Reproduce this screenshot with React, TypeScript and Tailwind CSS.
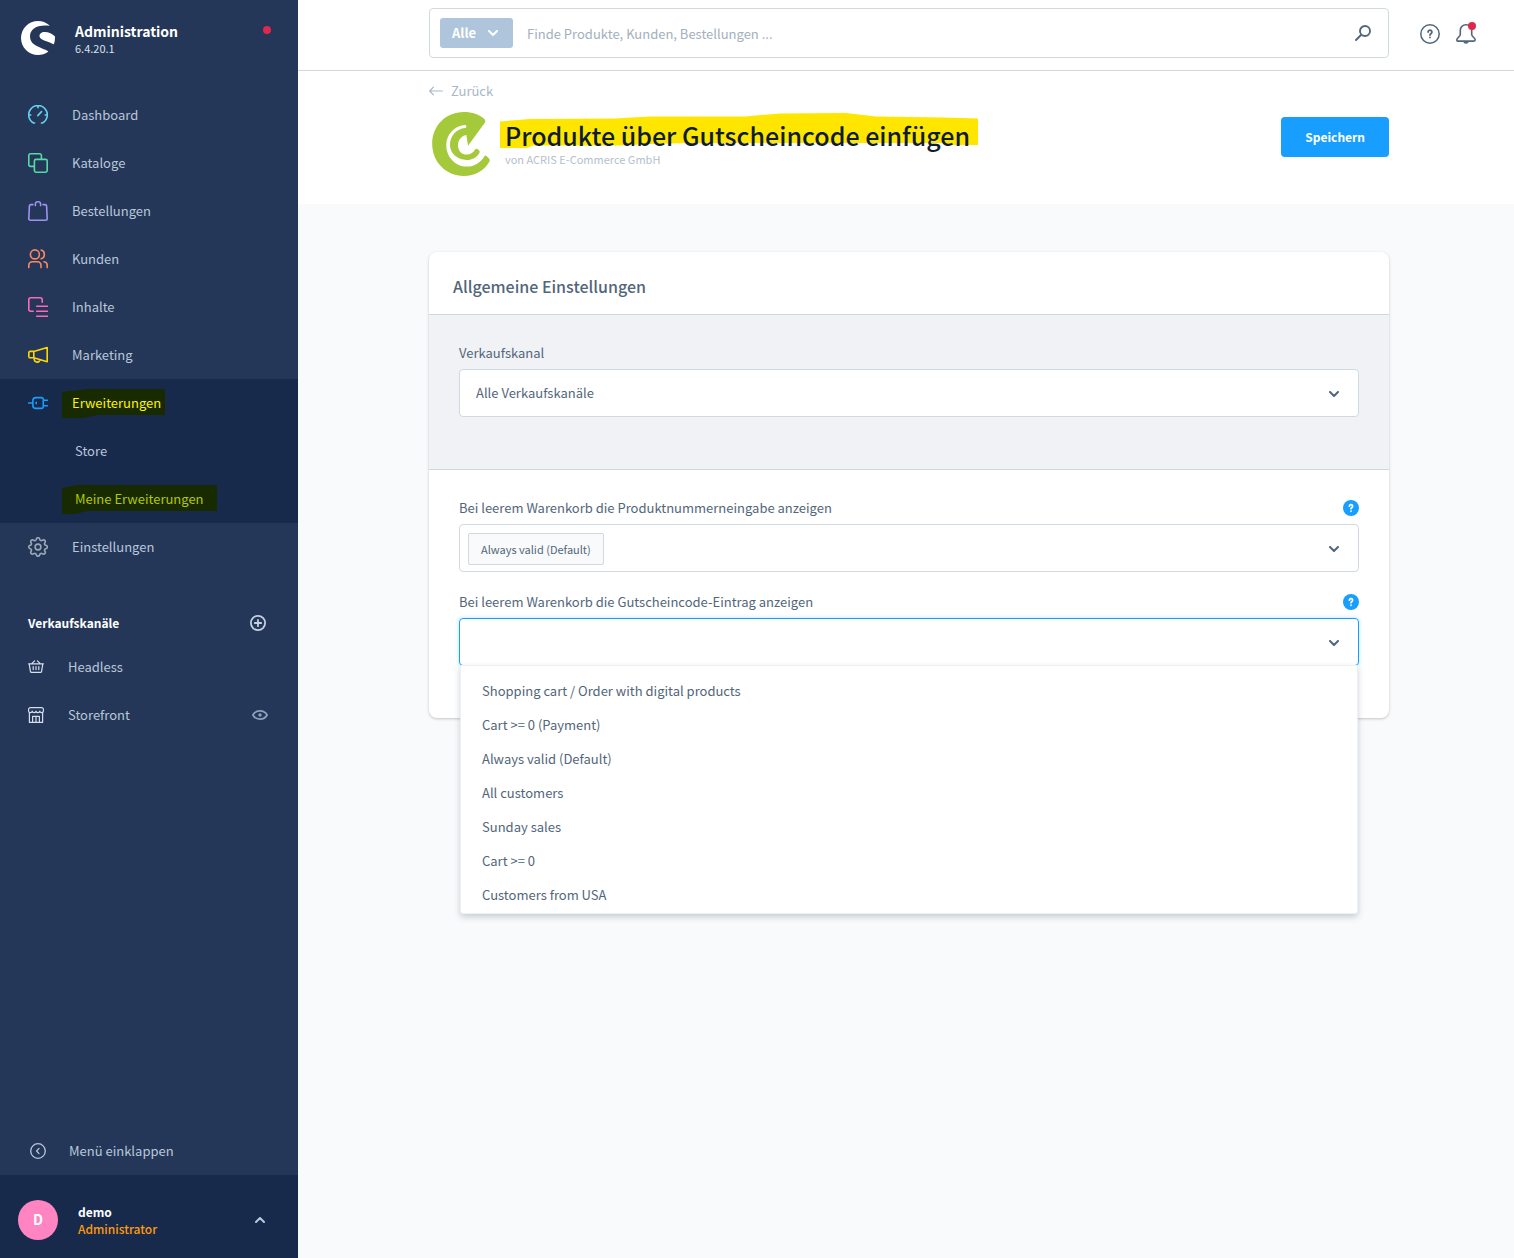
import type { ReactNode } from 'react';
import { SiShopware } from 'react-icons/si';

type IconProps = { children: ReactNode; className?: string };

function LineIcon({ children, className = '' }: IconProps) {
  return (
    <svg
      viewBox="0 0 20 20"
      fill="none"
      stroke="currentColor"
      strokeWidth="1.6"
      strokeLinecap="round"
      strokeLinejoin="round"
      aria-hidden="true"
      className={`h-5 w-5 shrink-0 ${className}`}
    >
      {children}
    </svg>
  );
}

const icons = {
  dashboard: (
    <LineIcon className="text-[#66d1ec]">
      <path d="M6.600 18H5.600A9.300 9.300 0 1 1 14.400 18H13.400M10 1v1.800M1 10h1.800M19 10h-1.800M9.800 10.600l3.700-4" />
    </LineIcon>
  ),
  catalogues: (
    <LineIcon className="text-[#57d9a3]">
      <path d="M6.200 13.400H2.400A1.600 1.600 0 0 1 .8 11.800V2.400A1.600 1.600 0 0 1 2.400.8h9.400a1.600 1.600 0 0 1 1.600 1.600v3.800" />
      <rect x="6.400" y="6.400" width="12.800" height="12.800" rx="1.600" />
    </LineIcon>
  ),
  orders: (
    <LineIcon className="text-[#a092f0]">
      <path d="M5 3.600H3A1.600 1.600 0 0 0 1.400 5.100L.8 17.700a1.500 1.500 0 0 0 1.500 1.500h15.400a1.500 1.500 0 0 0 1.500-1.500L18.600 5.100A1.600 1.600 0 0 0 17 3.600h-2M7.400 4.600V3A2.300 2.300 0 0 1 9.700.8h.6A2.300 2.300 0 0 1 12.600 3v1.600" />
    </LineIcon>
  ),
  customers: (
    <LineIcon className="text-[#f88962]">
      <circle cx="6.900" cy="5.400" r="4.500" />
      <path d="M.8 18.600v-2.400a3.400 3.400 0 0 1 3.400-3.400h5.400a3.400 3.400 0 0 1 3.400 3.400v2.400M13.200 1.100a4.500 4.500 0 0 1 0 8.600M16 12.800a3.600 3.600 0 0 1 3.200 3.500v2.300" />
    </LineIcon>
  ),
  content: (
    <LineIcon className="text-[#ff68b4]">
      <path d="M5.200 14.200H2.600A1.800 1.800 0 0 1 .8 12.400V2.600A1.800 1.800 0 0 1 2.600.8h9.800a1.800 1.800 0 0 1 1.800 1.800v2.600M8.700 9.300h10.700M8.700 14.300h10.700M8.700 19.200h10.700" />
    </LineIcon>
  ),
  marketing: (
    <LineIcon className="text-[#ffd700]">
      <path d="M5.800 6.400 19.200 2.600v14.200L5.800 12.800M5.800 6.400v6.400M5.800 6.400H2.200A1.400 1.400 0 0 0 .8 7.800v3.600a1.400 1.400 0 0 0 1.400 1.400h3.600M6.200 13v1.600a3 3 0 0 0 5.200 1.500l.3-1.300" />
    </LineIcon>
  ),
  extensions: (
    <LineIcon className="text-[#189eff]">
      <path d="M.7 10h4.200M4.900 7.600a3 3 0 0 1 3-3h5.600a1.800 1.800 0 0 1 1.800 1.800v7.200a1.800 1.800 0 0 1-1.800 1.800H7.900a3 3 0 0 1-3-3zM8.200 9.400v1.200M15.500 7.200h3.800M15.500 12.800h3.800" />
    </LineIcon>
  ),
  settings: (
    <LineIcon className="text-[#9aa8b5]">
      <circle cx="10" cy="10" r="2.900" />
      <path d="M8.200 2.500c.2-1.100.8-1.800 1.800-1.800s1.600.7 1.800 1.800c.3 1 1.500 1.500 2.400.9.900-.6 1.900-.7 2.600 0s.6 1.700 0 2.600c-.6.9-.1 2.100.9 2.300 1.100.2 1.700.8 1.700 1.700s-.6 1.500-1.700 1.700c-1 .2-1.500 1.400-.9 2.300.6.900.7 1.900 0 2.600s-1.700.6-2.600 0c-.9-.6-2.100-.1-2.400.9-.2 1.100-.8 1.800-1.800 1.800s-1.600-.7-1.800-1.800c-.3-1-1.500-1.500-2.400-.9-.9.600-1.900.7-2.600 0s-.6-1.700 0-2.600c.6-.9.1-2.100-.9-2.300C1.200 11.500.7 10.900.7 10s.5-1.500 1.600-1.700c1-.2 1.500-1.400.9-2.300-.6-.9-.7-1.900 0-2.600s1.700-.6 2.600 0c.9.600 2.100.1 2.400-.9z" />
    </LineIcon>
  ),
};

function Chevron({ className = '' }: { className?: string }) {
  return (
    <svg viewBox="0 0 10 6" fill="none" stroke="currentColor" strokeWidth="2" strokeLinecap="round" strokeLinejoin="round" aria-hidden="true" className={`h-[6px] w-[10px] shrink-0 ${className}`}>
      <path d="M1 1l4 4 4-4" />
    </svg>
  );
}

function BrandMark() {
  return (
    <svg viewBox="36 336 172 191" aria-hidden="true" className="h-16 w-[58px]" fill="#a4c93a">
      <path d="M130 336c25 0 47 8 61 20q6 6 2 12L143 437 138 405C122 408 113 421 113 435c0 17 11 28 26 28 11 0 19-5 25-15q4-4 8-1l4 4q3 3 1 7c-8 13-22 21-38 21-28 0-50-20-50-45 0-26 20-48 45-50q4 0 4-5t-5-4c-31 2-55 29-55 60 0 35 28 64 61 64 23 0 42-12 53-31q2-4 6-1l7 7q4 5 2 10c-14 26-43 43-77 43-53 0-94-42-94-96s41-95 94-95z" />
    </svg>
  );
}

const mainMenu = [
  { label: 'Dashboard', icon: icons.dashboard },
  { label: 'Kataloge', icon: icons.catalogues },
  { label: 'Bestellungen', icon: icons.orders },
  { label: 'Kunden', icon: icons.customers },
  { label: 'Inhalte', icon: icons.content },
  { label: 'Marketing', icon: icons.marketing },
];

function MenuLink({ label, icon }: { label: string; icon: ReactNode }) {
  return (
    <a href="#" className="flex h-12 items-center gap-6 pl-7">
      {icon}
      {label}
    </a>
  );
}

function Sidebar() {
  return (
    <aside className="flex w-[298px] shrink-0 flex-col bg-[#243758] text-[13px] text-[#b9c7da]">
      <div className="flex h-[91px] items-start pt-[21px] pr-[27px] pl-[21px]">
        <SiShopware aria-hidden="true" className="h-[34px] w-[34px] text-white" />
        <div className="ml-5 flex-1">
          <div className="text-[14px] leading-5 font-bold text-white">Administration</div>
          <div className="text-[11px] leading-[14px] text-[#d8e0ea]">6.4.20.1</div>
        </div>
        <span className="mt-[5px] h-2 w-2 rounded-full bg-[#de294c]" />
      </div>

      <nav aria-label="Hauptmenü">
        {mainMenu.map((m) => (
          <MenuLink key={m.label} {...m} />
        ))}
        <div className="bg-[#182a4c]">
          <a href="#" className="flex h-12 items-center gap-6 pl-7 text-[#fff200]">
            {icons.extensions}
            <span className="relative">
              <svg viewBox="0 0 103 29" preserveAspectRatio="none" aria-hidden="true" className="absolute -top-1 -left-[10px] h-[29px] w-[103px]">
                <path fill="#182a00" d="M0 3l27-3h76v26H36l-15 3H0z" />
              </svg>
              <span className="relative">Erweiterungen</span>
            </span>
          </a>
          <a href="#" className="flex h-12 items-center pl-[75px]">
            Store
          </a>
          <a href="#" className="flex h-12 items-center pl-[75px] text-[#b3c800]">
            <span className="relative">
              <svg viewBox="0 0 155 29" preserveAspectRatio="none" aria-hidden="true" className="absolute -top-1 -left-[13px] h-[29px] w-[155px]">
                <path fill="#182a00" d="M0 3l15-3h140v26H26l-13 3H0z" />
              </svg>
              <span className="relative">Meine Erweiterungen</span>
            </span>
          </a>
        </div>
        <MenuLink label="Einstellungen" icon={icons.settings} />
      </nav>

      <div className="mt-[31px] flex h-[41px] items-center justify-between pr-8 pl-7">
        <h2 className="text-[12px] font-bold text-white">Verkaufskanäle</h2>
        <button type="button" aria-label="Verkaufskanal hinzufügen" className="text-[#c3d0e2]">
          <svg viewBox="0 0 16 16" fill="none" stroke="currentColor" strokeWidth="1.800" strokeLinecap="round" className="h-4 w-4">
            <circle cx="8" cy="8" r="7.100" />
            <path d="M8 4.800v6.400M4.800 8h6.400" />
          </svg>
        </button>
      </div>
      <nav aria-label="Verkaufskanäle">
        <a href="#" className="flex h-12 items-center gap-6 pl-7">
          <svg viewBox="0 0 16 16" fill="none" stroke="#d5deea" strokeWidth="1.200" strokeLinecap="round" strokeLinejoin="round" aria-hidden="true" className="h-4 w-4">
            <path d="M.6 4.800h14.800M1.200 4.800l1.200 7.600a1.200 1.200 0 0 0 1.200 1h8.800a1.200 1.200 0 0 0 1.200-1l1.200-7.600M4 4.400l2.600-2.600M12 4.400 9.400 1.800M5.200 7.600v3M8 7.600v3M10.800 7.600v3" />
          </svg>
          Headless
        </a>
        <div className="flex h-12 items-center justify-between pr-[30px] pl-7">
          <a href="#" className="flex items-center gap-6">
            <svg viewBox="0 0 16 16" fill="none" stroke="#d5deea" strokeWidth="1.200" strokeLinecap="round" strokeLinejoin="round" aria-hidden="true" className="h-4 w-4">
              <path d="M2.400.6h11.200a1.800 1.800 0 0 1 1.800 1.800V4c0 1-.8 1.700-1.700 1.700-1.100 0-1.900-.7-1.900-1.700 0 1-.8 1.700-1.900 1.700S8 5 8 4c0 1-.8 1.700-1.900 1.700S4.200 5 4.200 4c0 1-.8 1.700-1.900 1.700C1.400 5.700.6 5 .6 4V2.400A1.800 1.800 0 0 1 2.400.6zM1.400 6v9.400h13.200V6M4.600 15.200V9.400h6.800v5.800M8 9.400v5.800" />
            </svg>
            Storefront
          </a>
          <button type="button" aria-label="Storefront öffnen" className="text-[#8fa2bc]">
            <svg viewBox="0 0 16 10" fill="none" stroke="currentColor" strokeWidth="1.700" className="h-[10px] w-4">
              <path d="M.9 5C2.400 2.200 5 .9 8 .9S13.600 2.200 15.100 5C13.600 7.800 11 9.100 8 9.100S2.400 7.800.9 5z" />
              <circle cx="8" cy="5" r="1.700" fill="currentColor" stroke="none" />
            </svg>
          </button>
        </div>
      </nav>

      <button type="button" className="mt-auto flex h-12 items-center gap-[23px] pl-[30px]">
        <svg viewBox="0 0 16 16" fill="none" stroke="currentColor" strokeWidth="1.300" strokeLinecap="round" strokeLinejoin="round" aria-hidden="true" className="h-4 w-4">
          <circle cx="8" cy="8" r="7.300" />
          <path d="M9 5.400 6.600 8 9 10.600" />
        </svg>
        Menü einklappen
      </button>
      <button type="button" className="flex h-[83px] items-center bg-[#182a4c] pt-[6px] pr-[33px] pl-[18px] text-left">
        <span className="flex h-10 w-10 items-center justify-center rounded-full bg-[#ff85c2] text-[14px] font-bold text-white">D</span>
        <span className="ml-5 flex-1 text-[12px] leading-[17px]">
          <span className="block font-bold text-white">demo</span>
          <span className="block font-medium text-[#ff9a0a]">Administrator</span>
        </span>
        <Chevron className="rotate-180" />
      </button>
    </aside>
  );
}

function TopBar() {
  return (
    <header className="grid grid-cols-[1fr_minmax(0,960px)_1fr] items-center border-b border-[#d1d9e0] bg-white pt-2 pb-3 pl-[6px]">
      <div />
      <form role="search" className="flex h-[50px] items-center rounded border border-[#d1d9e0] pr-4 pl-[10px]" onSubmit={(e) => e.preventDefault()}>
        <button type="button" className="flex h-[30px] w-[73px] items-center justify-between rounded-[3px] bg-[#afc5dc] pr-[15px] pl-3 text-[13px] font-bold text-white">
          Alle
          <Chevron />
        </button>
        <input
          type="text"
          aria-label="Suche"
          placeholder="Finde Produkte, Kunden, Bestellungen ..."
          className="ml-[14px] h-8 min-w-0 flex-1 text-[13px] outline-none placeholder:text-[#a3b0bd]"
        />
        <button type="submit" aria-label="Suchen" className="text-[#52667a]">
          <svg viewBox="0 0 18 18" fill="none" stroke="currentColor" strokeWidth="1.900" strokeLinecap="round" className="h-[18px] w-[18px]">
            <circle cx="11" cy="7" r="5" />
            <path d="M7 11 2 16" />
          </svg>
        </button>
      </form>
      <div className="flex items-center gap-4 pt-[2px] pl-[31px] text-[#52667a]">
        <button type="button" aria-label="Hilfe">
          <svg viewBox="0 0 20 20" fill="none" stroke="currentColor" strokeWidth="1.500" strokeLinecap="round" className="h-5 w-5">
            <circle cx="10" cy="10" r="9.200" />
            <path strokeWidth="1.800" d="M8.100 8.100a1.900 1.900 0 1 1 3 1.500c-.7.500-1.100.8-1.100 1.400M10 13.300v.1" />
          </svg>
        </button>
        <button type="button" aria-label="Benachrichtigungen" className="relative">
          <svg viewBox="0 0 20 20" fill="none" stroke="currentColor" strokeWidth="1.600" strokeLinecap="round" strokeLinejoin="round" className="h-5 w-5">
            <path d="M4.300 6.300A5.500 5.500 0 0 1 9.800.8h.4a5.500 5.500 0 0 1 5.500 5.500v4.200c0 2 3.500 3.500 3.500 5.300 0 .9-.5 1.300-1.400 1.300H2.200c-.9 0-1.400-.4-1.400-1.300 0-1.800 3.500-3.300 3.500-5.300zM7.800 17.300a2.300 2.300 0 0 0 4.400 0" />
          </svg>
          <span className="absolute -top-[2px] right-0 h-2 w-2 rounded-full bg-[#de294c]" />
        </button>
      </div>
    </header>
  );
}

function PageHead() {
  return (
    <div className="bg-white pt-3 pb-7 pl-[6px]">
      <div className="mx-auto max-w-[960px]">
        <div className="flex">
          <a href="#" className="flex items-center gap-2 text-[13px] leading-4 text-[#a9b8c8]">
            <svg viewBox="0 0 14 10" fill="none" stroke="currentColor" strokeWidth="1.200" strokeLinecap="round" strokeLinejoin="round" aria-hidden="true" className="h-[10px] w-[14px]">
              <path d="M13.400 5H.8M4.400 1.200.7 5l3.700 3.800" />
            </svg>
            Zurück
          </a>
        </div>
        <div className="flex items-start pt-3">
          <div className="mt-px ml-[3px]">
            <BrandMark />
          </div>
          <div className="mt-2 ml-[15px] flex-1">
            <h1 className="text-[25px] leading-8 font-medium text-[#0e1c33]">
              <span className="relative inline-block">
                <svg viewBox="0 0 478 35" preserveAspectRatio="none" aria-hidden="true" className="absolute -top-[6px] -left-[5px] h-[35px] w-[478px]">
                  <path fill="#ffe600" d="M0 8.500 30 6l85-.5L150 3.500h95L280 .5 346 0l30 3.500 67 1 35 1V32h-25l-10-2H190l-40 1-30 1.500H33L27 35H0z" />
                </svg>
                <span className="relative">Produkte über Gutscheincode einfügen</span>
              </span>
            </h1>
            <p className="text-[11px] leading-4 text-[#b3c0ce]">von ACRIS E-Commerce GmbH</p>
          </div>
          <button type="button" className="mt-[6px] h-10 rounded bg-[#189eff] px-6 text-[12px] font-bold text-white">
            Speichern
          </button>
        </div>
      </div>
    </div>
  );
}

function HelpBadge() {
  return (
    <button type="button" aria-label="Hilfe anzeigen" className="flex h-4 w-4 items-center justify-center rounded-full bg-[#189eff] text-white">
      <svg viewBox="0 0 16 16" fill="none" stroke="currentColor" strokeWidth="1.700" strokeLinecap="round" className="h-4 w-4">
        <path d="M6.400 6.200a1.600 1.600 0 1 1 2.500 1.300c-.6.400-.9.700-.9 1.200M8 11.200v.1" />
      </svg>
    </button>
  );
}

const rules = [
  'Shopping cart / Order with digital products',
  'Cart >= 0 (Payment)',
  'Always valid (Default)',
  'All customers',
  'Sunday sales',
  'Cart >= 0',
  'Customers from USA',
];

function SettingsCard() {
  return (
    <section className="mx-auto max-w-[960px] rounded-lg bg-white text-[13px] text-[#52667a] shadow-[0_1px_3px_rgba(0,0,0,0.22)]">
      <h2 className="flex h-[62px] items-center px-6 pt-[6px] text-[16px] font-medium">Allgemeine Einstellungen</h2>
      <div className="border-y border-[#d1d9e0] bg-[#f0f2f5] px-[30px] pt-[26px] pb-[52px]">
        <label htmlFor="channel" className="block leading-6">
          Verkaufskanal
        </label>
        <div className="relative mt-1">
          <select id="channel" className="block h-12 w-full appearance-none rounded border border-[#d1d9e0] bg-white px-4">
            <option>Alle Verkaufskanäle</option>
          </select>
          <Chevron className="pointer-events-none absolute top-[22px] right-5" />
        </div>
      </div>
      <div className="px-[30px] pt-[26px] pb-[52px]">
        <div className="flex items-center justify-between leading-6">
          <label htmlFor="number-rule">Bei leerem Warenkorb die Produktnummerneingabe anzeigen</label>
          <HelpBadge />
        </div>
        <div className="mt-1 flex h-12 items-center rounded border border-[#d1d9e0] pt-[2px] pr-[19px] pl-2">
          <span className="flex h-8 items-center rounded-[2px] border border-[#d1d9e0] bg-[#f9fafb] px-3 text-[11px]">Always valid (Default)</span>
          <input id="number-rule" type="text" className="h-8 min-w-0 flex-1 outline-none" />
          <Chevron />
        </div>

        <div className="mt-[18px] flex items-center justify-between leading-6">
          <label htmlFor="code-rule">Bei leerem Warenkorb die Gutscheincode-Eintrag anzeigen</label>
          <HelpBadge />
        </div>
        <div className="relative mt-1">
          <div className="flex h-12 items-center rounded border border-[#189eff] pt-[2px] pr-[19px] pl-2 shadow-[0_0_4px_rgba(24,158,255,0.3)]">
            <input id="code-rule" type="text" role="combobox" aria-expanded="true" aria-controls="rule-list" className="h-8 min-w-0 flex-1 outline-none" />
            <Chevron />
          </div>
          <ul
            id="rule-list"
            role="listbox"
            className="absolute inset-x-px top-[47px] z-10 rounded-b-[3px] border border-[#eef1f4] bg-white pt-2 pb-px shadow-[0_3px_6px_rgba(82,102,122,0.3)]"
          >
            {rules.map((rule) => (
              <li key={rule} role="option" aria-selected="false" className="px-[21px] leading-[34px]">
                {rule}
              </li>
            ))}
          </ul>
        </div>
      </div>
    </section>
  );
}

export default function App() {
  return (
    <div className="flex min-h-screen bg-[#f9fafb] font-['Noto_Sans_CJK_SC',sans-serif]">
      <Sidebar />
      <div className="min-w-0 flex-1">
        <TopBar />
        <main>
          <PageHead />
          <div className="pt-12 pl-[6px]">
            <SettingsCard />
          </div>
        </main>
      </div>
    </div>
  );
}
